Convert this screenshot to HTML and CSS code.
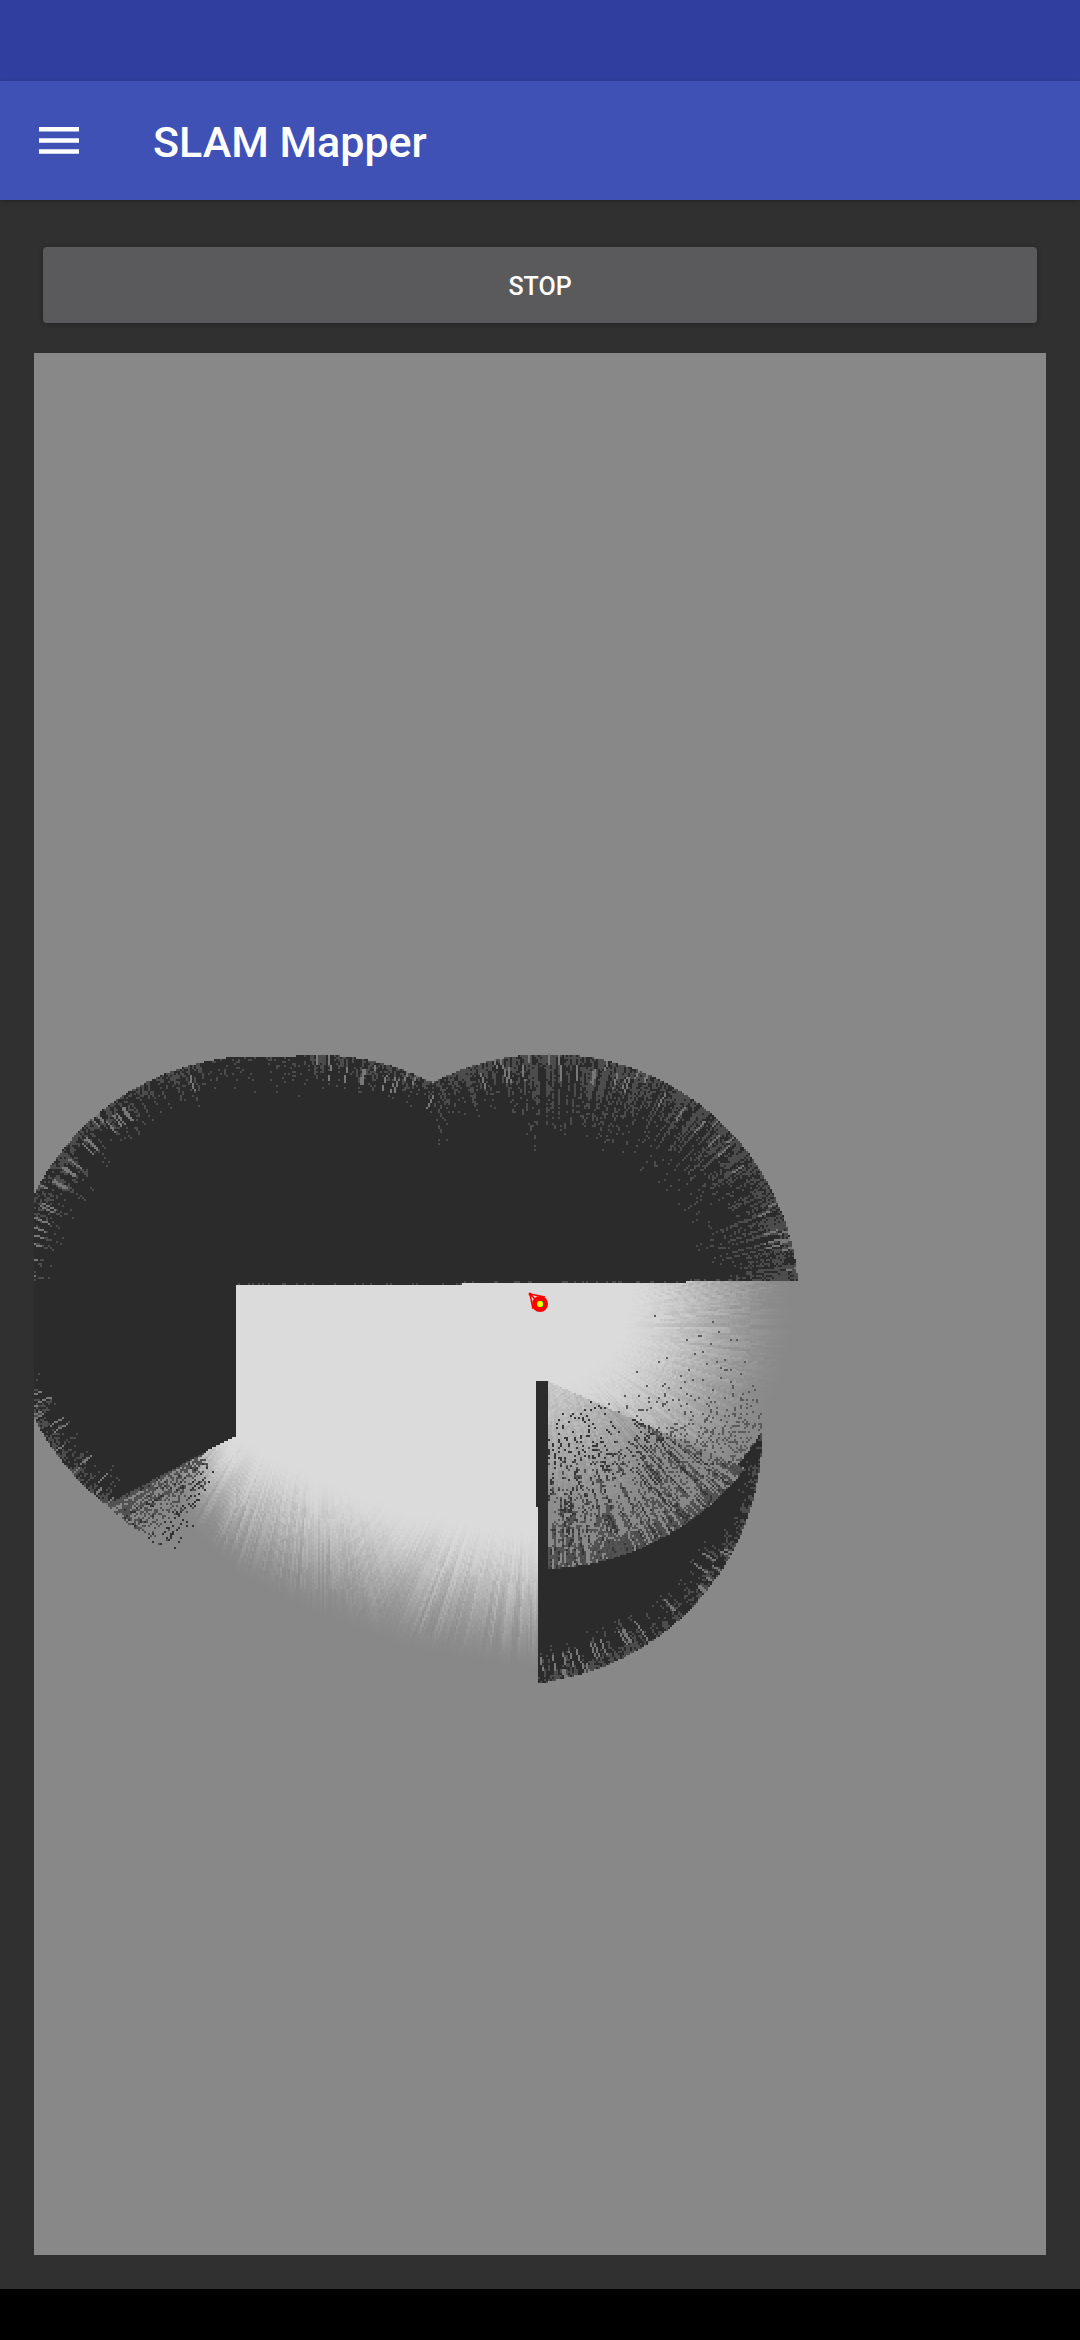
FILE: index.html
```html
<!DOCTYPE html>
<html lang="en">
<head>
<meta charset="utf-8">
<meta name="viewport" content="width=device-width, initial-scale=1">
<title>SLAM Mapper</title>
<link rel="stylesheet" href="styles.css">
</head>
<body>
<div class="status-bar"></div>
<header class="app-bar">
  <button class="menu-button" type="button" aria-label="Open menu">
    <svg class="menu-icon" viewBox="0 0 40 27" aria-hidden="true">
      <path d="M0 0h40v4.500H0zM0 11.200h40v4.500H0zM0 22.300h40v4.500H0z"/>
    </svg>
  </button>
  <h1 class="title">SLAM Mapper</h1>
</header>
<main class="content">
  <button class="stop-button" type="button">STOP</button>
  <div class="map">
    <canvas class="map-grid" id="map" width="506" height="951"></canvas>
    <svg class="map-marker" viewBox="0 0 1012 1902" aria-hidden="true">
      <path d="M496 941L511 944M496 941L499 956M496 941L503 948" fill="none" stroke="#f00" stroke-width="1.500"/>
      <circle cx="496" cy="941" r="1.500" fill="#f00"/>
      <circle cx="506" cy="951" r="8" fill="#f00"/>
      <path d="M506 948h3v6h-3z" fill="#00c81e"/>
      <circle cx="506" cy="951" r="3" fill="#ff0"/>
    </svg>
  </div>
</main>
<div class="nav-bar"></div>
<script src="map.js"></script>
</body>
</html>
```
FILE: styles.css
```css
* {
  box-sizing: border-box;
}

body {
  margin: 0;
  min-height: 100vh;
  display: flex;
  flex-direction: column;
  background: #303030;
  color: #fff;
  font-family: Roboto, sans-serif;
}

.status-bar {
  height: 81px;
  background: #303f9f;
}

.app-bar {
  height: 119px;
  display: flex;
  align-items: center;
  gap: 65px;
  padding: 0 30px;
  background: #3f51b5;
  box-shadow: 0 1px 4px rgba(0, 0, 0, 0.3);
}

.menu-button {
  display: flex;
  padding: 9px;
  border: 0;
  background: none;
}

.menu-icon {
  width: 40px;
  height: 27px;
  fill: #fff;
}

.title {
  margin: 0;
  padding-top: 2px;
  font-size: 43px;
  font-weight: 500;
  line-height: 52px;
}

.content {
  flex: 1;
  display: flex;
  flex-direction: column;
  gap: 30px;
  padding: 47px 34px 34px;
}

.stop-button {
  height: 76px;
  margin: 0 9px;
  padding: 2px 0 0;
  border: 0;
  border-radius: 4px;
  background: #5a5a5c;
  box-shadow: 0 1px 5px rgba(0, 0, 0, 0.3);
  color: #fff;
  font-family: inherit;
  font-size: 25px;
  font-weight: 500;
}

.map {
  position: relative;
  background: #888;
}

.map-grid {
  display: block;
  width: 100%;
  height: auto;
  image-rendering: pixelated;
}

.map-marker {
  position: absolute;
  inset: 0;
  width: 100%;
  height: 100%;
}

.nav-bar {
  height: 51px;
  background: #000;
}
```
FILE: map.js
```js
// Occupancy grid: dark = unseen behind walls, light = free, grey = unknown.
const UNKNOWN = 136, SOLID = 43, SOFT = 76, FREE = 219;
const ORIGIN_X = 34, ORIGIN_Y = 353, CELL = 2, RANGE = 250;

function hash(a, b) {
  let h = Math.imul(a | 0, 374761393) ^ Math.imul(b | 0, 668265263);
  h = Math.imul(h ^ (h >>> 13), 1274126177);
  return ((h ^ (h >>> 16)) >>> 0) / 4294967296;
}
const clamp = v => Math.max(0, Math.min(1, v));
const dist = (x, y, cx, cy) => Math.hypot(x - cx, y - cy);
// Noise that stays constant along a laser ray from (cx, cy).
function ray(x, y, cx, cy, bins, len) {
  const a = Math.floor(Math.atan2(y - cy, x - cx) * bins);
  return hash(a + 900, Math.floor(dist(x, y, cx, cy) / len));
}

function solid(x, y, cx, cy, depth, range) {
  const edge = range - dist(x, y, cx, cy);
  const t = clamp(1 - edge / depth);
  const r = ray(x, y, cx, cy, 130, 60);
  const n = hash(x, y);
  if (edge < 26 && r < 0.09 && depth > 30) return 120;
  if (r * 0.6 + n * 0.4 < t * (depth > 60 ? 0.62 : 0.55)) return SOFT;
  return SOLID;
}

function fade(x, y, t, cx, cy) {
  const streak = ray(x, y, cx, cy, 190, 70) * 0.6 + ray(x, y, cx, cy, 70, 600) * 0.4 - 0.5;
  const v = clamp(t + streak * 0.22 * clamp(t * 5) * clamp((1.2 - t) * 2));
  const s = v * v * (3 - 2 * v);
  return UNKNOWN + (FREE - UNKNOWN) * s + (hash(x, y) - 0.5) * 8 * clamp(4 * s * (1 - s));
}

function cell(x, y) {
  const wall = 1286 - (x - 237) * 5 / 561;
  const dA = dist(x, y, 549, 1304), dB = dist(x, y, 318, 1305), dC = dist(x, y, 258, 1306);
  const dD = dist(x, y, 512, 1434);

  // Above the long top wall.
  if (y < wall) {
    if (Math.min(dA, dB, dC) > RANGE && !(x > 258 && x < 318 && y > 1056)) return UNKNOWN;
    if (x > 237 && y > wall - 2 && hash(x, y) < 0.2) return SOFT;
    if (x > 437) return solid(x, y, 549, 1304, x > 520 ? 105 : 70, RANGE);
    if (x > 310) return solid(x, y, 318, 1305, 42, RANGE);
    if (x < 200) return solid(x, y, 258, 1306, 52, RANGE);
    return hash(x, y) < 0.16 * clamp((1100 - y) / 44) ? SOFT : SOLID;
  }

  // Left of the room, with the cone seen past its corner.
  if (x < 237) {
    const edgeY = 1435 + (237 - x) * 0.535;
    if (y < edgeY) return dC > RANGE ? UNKNOWN : solid(x, y, 258, 1306, y > 1390 ? 40 : 24, RANGE);
    if (dC > RANGE + clamp((x - 110) / 70) * 14) return UNKNOWN;
    const below = Math.atan2(y - 1435, 237 - x);
    const far = dist(x, y, 237, 1435);
    const density = clamp((1.25 - below) / 0.6) * clamp(far / 50);
    const n = ray(x, y, 260, 1420, 85, 14) * 0.45 + hash(x, y) * 0.55;
    if (far > 38 && (n < density * 0.55 || (below < 0.58 && ray(x, y, 260, 1420, 130, 600) < 0.7))) return n < 0.2 ? 50 : 82;
    return fade(x, y, clamp(1.05 - far / (76 + 60 * clamp(below - 0.7))), 300, 1340);
  }

  // Pillar.
  const pillarLeft = 536 + (y - 1381) * 0.008;
  if (x >= pillarLeft && x < 548 && y > 1381 && y < 1683) {
    return y > 1645 ? solid(x, y, 512, 1434, 42, RANGE) : SOLID;
  }

  // Room floor, fading out toward the sensor range.
  if (x < pillarLeft || (x < 548 && y <= 1381)) {
    const k = clamp((x - 237) / 290);
    const start = 1434 + 94 * k + 18 * Math.sin(k * Math.PI);
    const t = 1 - (y - start) / 144;
    const mix = clamp((x - 330) / 90);
    const a = fade(x, y, t, 320, 1310), b = fade(x, y, t, 541, 1304);
    return a * (1 - mix) + b * mix;
  }

  // Right side: shadow wedge, dark crescent, then the open fan.
  const wedgeTop = 1381 + (x - 547) * 0.44;
  if (y > wedgeTop && dA < 265 - (x - 547) * 0.045) {
    if (dD > RANGE) return UNKNOWN;
    const far = dist(x, y, 547, 1375);
    const n = ray(x, y, 547, 1340, 120, 26) * 0.6 + hash(x, y) * 0.4;
    if (far > 40 && n < 0.14 + 0.36 * clamp((far - 45) / 120)) return n < 0.24 ? 54 : 84;
    if (dA > 243 && ray(x, y, 547, 1340, 150, 80) < 0.6) return SOFT;
    return fade(x, y, clamp(0.78 - far / 220), 547, 1340);
  }
  if (y > 1430 && dA >= 248) {
    return dD > RANGE ? UNKNOWN : solid(x, y, 512, 1434, y > 1540 ? 46 : 20, RANGE);
  }
  if (dA > RANGE) return UNKNOWN;
  const low = clamp((y - 1330) / 130);
  const out = clamp((dA - 90) / 130);
  if (dD < RANGE && x < 765 && hash(x, y) < out * (0.012 + 0.36 * low * low)) return 90;
  const t = 1 - (dA - 72) / 178;
  return fade(x, y, t, 541, 1325);
}

const canvas = document.getElementById("map");
const ctx = canvas.getContext("2d");
const image = ctx.createImageData(canvas.width, canvas.height);
for (let j = 0; j < canvas.height; j++) {
  for (let i = 0; i < canvas.width; i++) {
    const v = cell(ORIGIN_X + i * CELL + 1, ORIGIN_Y + j * CELL + 1);
    const p = (j * canvas.width + i) * 4;
    image.data[p] = image.data[p + 1] = image.data[p + 2] = v;
    image.data[p + 3] = 255;
  }
}
ctx.putImageData(image, 0, 0);
```
